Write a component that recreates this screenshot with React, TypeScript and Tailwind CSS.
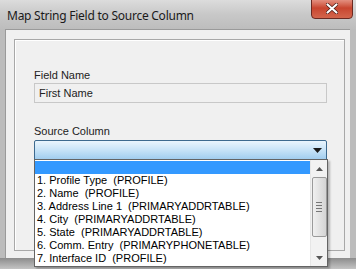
import React from "react";

const items = [
  "",
  "1. Profile Type  (PROFILE)",
  "2. Name  (PROFILE)",
  "3. Address Line 1  (PRIMARYADDRTABLE)",
  "4. City  (PRIMARYADDRTABLE)",
  "5. State  (PRIMARYADDRTABLE)",
  "6. Comm. Entry  (PRIMARYPHONETABLE)",
  "7. Interface ID  (PROFILE)",
];

export default function App() {
  return (
    <div
      className="relative w-[356px] h-[269px] overflow-hidden bg-[#bcbcbc] flex flex-col"
      style={{ fontFamily: '"Liberation Sans", Arial, sans-serif' }}
    >
      {/* title bar */}
      <div className="h-[29px] shrink-0 flex items-center pl-[7px] bg-gradient-to-b from-[#dcdcdc] via-[#c8c8c8] to-[#bdbdbd]">
        <span
          className="text-[12px] tracking-[-0.25px] text-[#1a1a1a] leading-none mt-[2px]"
          style={{ fontFamily: '"Noto Sans", "Open Sans", sans-serif' }}
        >
          Map String Field to Source Column
        </span>
      </div>
      {/* close button */}
      <div className="absolute top-[-3px] left-[311px] w-[42px] h-[22px] rounded-b-[4px] border border-[#6b2a22] bg-gradient-to-b from-[#e8a093] via-[#c8452f] to-[#d3654c] flex items-center justify-center">
        <svg width="12" height="11" viewBox="0 0 12 11">
          <path d="M1.5 1.5 L10.5 9.5 M10.5 1.5 L1.5 9.5" stroke="#4a1a14" strokeWidth="3.6" strokeLinecap="round" />
          <path d="M1.5 1.5 L10.5 9.5 M10.5 1.5 L1.5 9.5" stroke="#ffffff" strokeWidth="2.2" strokeLinecap="round" />
        </svg>
      </div>

      {/* client area */}
      <div className="ml-[5px] mr-[6px] h-[229px] shrink-0 bg-[#f0f0f0] border-l border-t border-[#9a9a9a] pl-[8px] pt-[9px]">
        <div className="w-[331px] h-[212px] border border-[#a8a8a8] shadow-[inset_1px_1px_0_#ffffff] pl-[19px] pt-[28px]">
          <div className="text-[11px] leading-[14px] text-[#222]">Field Name</div>
          <div className="mt-[1px] w-[293px] h-[20px] border border-[#c8c8c8] bg-[#f0f0f0] flex items-center pl-[4px] text-[11px] text-[#222]">
            First Name
          </div>
          <div className="mt-[21px] text-[11px] leading-[14px] text-[#222]">Source Column</div>
          <div className="mt-[2px] w-[293px] h-[21px] rounded-[2px] border border-[#3d6a8f] bg-gradient-to-b from-[#eaf5fd] via-[#c5e2f7] to-[#9dcbee] flex items-center justify-end pr-[4px]">
            <svg width="9" height="5" viewBox="0 0 9 5">
              <path d="M0 0 L9 0 L4.5 5 Z" fill="#1a1a1a" />
            </svg>
          </div>
        </div>
      </div>

      {/* bottom frame */}
      <div className="flex-1 bg-gradient-to-b from-[#8c8c8c] via-[#a8a8a8] to-[#c4c4c4]" />

      {/* dropdown list */}
      <div className="absolute left-[34px] top-[159px] w-[294px] h-[108px] bg-white border border-[#646464] shadow-[2px_2px_2px_rgba(0,0,0,0.25)] flex">
        <div className="flex-1 flex flex-col pt-[1px]">
          {items.map((t, i) => (
            <div
              key={i}
              className={
                "h-[13px] shrink-0 pl-[2px] text-[11px] leading-[13px] whitespace-pre text-black " +
                (i === 0 ? "bg-[#3399ff]" : "")
              }
            >
              {t}
            </div>
          ))}
        </div>
        <div className="w-[17px] bg-[#f2f2f2] border-l border-[#e6e6e6] flex flex-col items-center">
          <div className="h-[17px] w-full flex items-center justify-center">
            <svg width="7" height="4" viewBox="0 0 7 4">
              <path d="M0 4 L7 4 L3.5 0 Z" fill="#555" />
            </svg>
          </div>
          <div className="w-[15px] h-[60px] rounded-[2px] border border-[#9a9a9a] bg-gradient-to-r from-[#f0f0f0] via-[#e2e2e2] to-[#d4d4d4] flex flex-col items-center justify-center gap-[2px]">
            <div className="w-[6px] h-[1px] bg-[#777]" />
            <div className="w-[6px] h-[1px] bg-[#777]" />
            <div className="w-[6px] h-[1px] bg-[#777]" />
            <div className="w-[6px] h-[1px] bg-[#777]" />
          </div>
          <div className="flex-1" />
          <div className="h-[17px] w-full flex items-center justify-center">
            <svg width="7" height="4" viewBox="0 0 7 4">
              <path d="M0 0 L7 0 L3.5 4 Z" fill="#555" />
            </svg>
          </div>
        </div>
      </div>
    </div>
  );
}
